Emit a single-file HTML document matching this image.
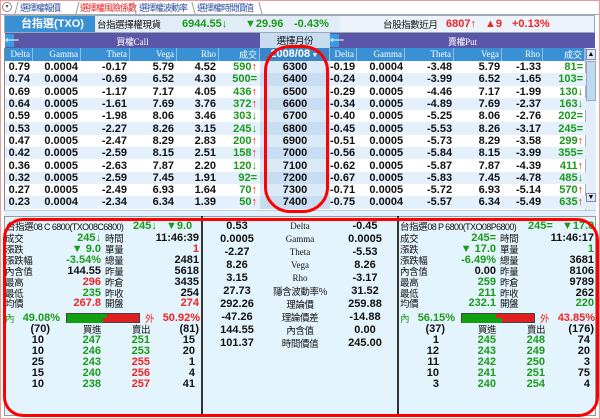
<!DOCTYPE html>
<html><head><meta charset="utf-8"><style>
*{margin:0;padding:0;box-sizing:border-box}
body{width:600px;height:419px;overflow:hidden;background:#fff;font-family:"Liberation Sans","Noto Sans CJK TC",sans-serif;position:relative}
.a{position:absolute;white-space:nowrap;line-height:11px}
.frame{position:absolute;left:0;top:0;width:600px;height:419px;border:1px solid #f09a9a}
.g{color:#1a9a1a}.r{color:#f02424}.k{color:#111}
.b{font-weight:bold;font-size:11px}
.s{font-family:"Liberation Serif","Noto Serif CJK SC",serif;font-size:9px}
.cj{font-family:"Noto Sans CJK TC",sans-serif;font-size:9.5px;letter-spacing:-0.4px}
table{border-collapse:collapse;position:absolute;left:5px;top:61px;table-layout:fixed}
td{height:12.3px;font-weight:bold;font-size:11px;text-align:right;padding:0 3px 0 0;line-height:12px;color:#111}
tr:nth-child(even) td{background:#e4f0fc}
td.st{text-align:center;background:#dceaf8;padding:0}
tr:nth-child(even) td.st{background:#c8dcf2}
td.v{color:#1a9a1a}
.hd{position:absolute;top:48px;height:13px;background:#3a90d4;color:#fff;font-family:"Liberation Serif",serif;font-size:9px;text-align:right;padding-right:2px;line-height:13px;border-right:1px solid #8cc0ea}
.pl{position:absolute;background:#e4f4fc}
.lab{font-family:"Noto Sans CJK TC",sans-serif;font-weight:normal;font-size:9.5px;letter-spacing:-0.4px;color:#111;line-height:11px}
</style></head><body>
<div class="frame"></div>
<div class="a" style="left:2px;top:2px;width:10px;height:10px;border:1px solid #888;border-radius:50%;font-size:6px;text-align:center;line-height:8px;color:#555">▾</div>
<div class="a" style="left:0;top:14px;width:600px;height:1px;background:#aaa"></div>
<div class="a cj" style="left:20px;top:2px;font-size:9px;letter-spacing:-1px;color:#3050a0">選擇權報價</div>
<div class="a cj" style="left:80px;top:2px;font-size:9px;letter-spacing:-1px;color:#f02020">選擇權風險係數</div>
<div class="a cj" style="left:139px;top:2px;font-size:9px;letter-spacing:-1px;color:#3050a0">選擇權波動率</div>
<div class="a cj" style="left:197px;top:2px;font-size:9px;letter-spacing:-1px;color:#3050a0">選擇權時間價值</div>
<div class="a" style="left:16px;top:2px;width:1px;height:12px;background:#999;transform:skewX(-15deg)"></div>
<div class="a" style="left:77px;top:2px;width:1px;height:12px;background:#999;transform:skewX(-15deg)"></div>
<div class="a" style="left:134px;top:2px;width:1px;height:12px;background:#999;transform:skewX(15deg)"></div>
<div class="a" style="left:193px;top:2px;width:1px;height:12px;background:#999;transform:skewX(15deg)"></div>
<div class="a" style="left:260px;top:2px;width:1px;height:12px;background:#999;transform:skewX(15deg)"></div>
<div class="a" style="left:4px;top:15px;width:591px;height:18px;background:#e2ecf6;border:1px solid #9ab"></div>
<div class="a" style="left:5px;top:16px;width:90px;height:16px;background:#3a90d4;color:#fff;font-size:11px;font-weight:bold;line-height:16px;padding-left:16px">台指選(TXO)<span style="font-size:7px;margin-left:12px">▾</span></div>
<div class="a" style="left:340px;top:16px;width:254px;height:16px;background:#ecf3fa"></div>
<div class="a cj k" style="left:97px;top:19px">台指選擇權現貨</div>
<div class="a g b" style="left:182px;top:19px">6944.55↓</div>
<div class="a g b" style="left:245px;top:19px">▼29.96</div>
<div class="a g b" style="left:294px;top:19px">-0.43%</div>
<div class="a cj k" style="left:383px;top:19px">台股指數近月</div>
<div class="a r b" style="left:446px;top:19px">6807↑</div>
<div class="a r b" style="left:485px;top:19px">▲9</div>
<div class="a r b" style="left:512px;top:19px">+0.13%</div>
<div class="a" style="left:5px;top:33px;width:255px;height:15px;background:#5c56a8;color:#fff;text-align:center;line-height:15px"><span class="cj" style="color:#fff;font-size:9px">買權</span><span class="s" style="color:#fff">Call</span></div>
<div class="a" style="left:5px;top:34px;width:9px;height:13px;background:#3a9ae0;color:#fff;font-size:10px;line-height:13px">⟵</div>
<div class="a cj" style="left:260px;top:33px;width:70px;height:15px;background:#c8dcf0;text-align:center;line-height:15px;color:#111">選擇月份</div>
<div class="a" style="left:330px;top:33px;width:265px;height:15px;background:#5c56a8;color:#fff;text-align:center;line-height:15px"><span class="cj" style="color:#fff;font-size:9px">賣權</span><span class="s" style="color:#fff">Put</span></div>
<div class="a" style="left:330px;top:34px;width:9px;height:13px;background:#3a9ae0;color:#fff;font-size:10px;line-height:13px">⟵</div>
<div class="hd" style="left:5px;width:28px">Delta</div>
<div class="hd" style="left:33px;width:48px">Gamma</div>
<div class="hd" style="left:81px;width:49px">Theta</div>
<div class="hd" style="left:130px;width:47px">Vega</div>
<div class="hd" style="left:177px;width:42px">Rho</div>
<div class="hd" style="left:219px;width:41px;font-family:'Noto Sans CJK TC',sans-serif;font-size:9px">成交</div>
<div class="hd" style="left:260px;width:70px;text-align:center;font-family:'Liberation Sans';font-weight:bold;font-size:11px;background:#3a84c8">2008/08 <span style="font-size:7px">▾</span></div>
<div class="hd" style="left:330px;width:27px">Delta</div>
<div class="hd" style="left:357px;width:48px">Gamma</div>
<div class="hd" style="left:405px;width:49px">Theta</div>
<div class="hd" style="left:454px;width:48px">Vega</div>
<div class="hd" style="left:502px;width:41px">Rho</div>
<div class="hd" style="left:543px;width:42px;font-family:'Noto Sans CJK TC',sans-serif;font-size:9px">成交</div>
<div class="a" style="left:585px;top:48px;width:11px;height:164px;background:#e4eef8;border-left:1px solid #aac"></div>
<div class="a" style="left:586px;top:49px;width:10px;height:11px;background:#dde8f4;border:1px solid #88a;font-size:7px;text-align:center;line-height:9px">▲</div>
<div class="a" style="left:586px;top:61px;width:10px;height:40px;background:#c0d8f0;border:1px solid #9ab"></div>
<div class="a" style="left:586px;top:193px;width:10px;height:9px;background:#dde8f4;border:1px solid #88a;font-size:7px;text-align:center;line-height:7px">▼</div>
<table>
<colgroup><col style="width:28px"><col style="width:48px"><col style="width:49px"><col style="width:47px"><col style="width:42px"><col style="width:41px"><col style="width:70px"><col style="width:27px"><col style="width:48px"><col style="width:49px"><col style="width:48px"><col style="width:41px"><col style="width:42px"></colgroup>
<tr><td>0.79</td><td>0.0004</td><td>-0.17</td><td>5.79</td><td>4.52</td><td class="v">590<span class="r">↑</span></td><td class="st">6300</td><td>-0.19</td><td>0.0004</td><td>-3.48</td><td>5.79</td><td>-1.33</td><td class="v">81=</td></tr>
<tr><td>0.74</td><td>0.0004</td><td>-0.69</td><td>6.52</td><td>4.30</td><td class="v">500=</td><td class="st">6400</td><td>-0.24</td><td>0.0004</td><td>-3.99</td><td>6.52</td><td>-1.65</td><td class="v">103=</td></tr>
<tr><td>0.69</td><td>0.0005</td><td>-1.17</td><td>7.17</td><td>4.05</td><td class="v">436<span class="r">↑</span></td><td class="st">6500</td><td>-0.29</td><td>0.0005</td><td>-4.46</td><td>7.17</td><td>-1.99</td><td class="v">130↓</td></tr>
<tr><td>0.64</td><td>0.0005</td><td>-1.61</td><td>7.69</td><td>3.76</td><td class="v">372<span class="r">↑</span></td><td class="st">6600</td><td>-0.34</td><td>0.0005</td><td>-4.89</td><td>7.69</td><td>-2.37</td><td class="v">163↓</td></tr>
<tr><td>0.59</td><td>0.0005</td><td>-1.98</td><td>8.06</td><td>3.46</td><td class="v">303↓</td><td class="st">6700</td><td>-0.40</td><td>0.0005</td><td>-5.25</td><td>8.06</td><td>-2.76</td><td class="v">202=</td></tr>
<tr><td>0.53</td><td>0.0005</td><td>-2.27</td><td>8.26</td><td>3.15</td><td class="v">245↓</td><td class="st">6800</td><td>-0.45</td><td>0.0005</td><td>-5.53</td><td>8.26</td><td>-3.17</td><td class="v">245=</td></tr>
<tr><td>0.47</td><td>0.0005</td><td>-2.47</td><td>8.29</td><td>2.83</td><td class="v">200<span class="r">↑</span></td><td class="st">6900</td><td>-0.51</td><td>0.0005</td><td>-5.73</td><td>8.29</td><td>-3.58</td><td class="v">299<span class="r">↑</span></td></tr>
<tr><td>0.42</td><td>0.0005</td><td>-2.59</td><td>8.15</td><td>2.51</td><td class="v">158<span class="r">↑</span></td><td class="st">7000</td><td>-0.56</td><td>0.0005</td><td>-5.84</td><td>8.15</td><td>-3.99</td><td class="v">355=</td></tr>
<tr><td>0.36</td><td>0.0005</td><td>-2.63</td><td>7.87</td><td>2.20</td><td class="v">120↓</td><td class="st">7100</td><td>-0.62</td><td>0.0005</td><td>-5.87</td><td>7.87</td><td>-4.39</td><td class="v">411<span class="r">↑</span></td></tr>
<tr><td>0.32</td><td>0.0005</td><td>-2.59</td><td>7.45</td><td>1.91</td><td class="v">92=</td><td class="st">7200</td><td>-0.67</td><td>0.0005</td><td>-5.83</td><td>7.45</td><td>-4.78</td><td class="v">485↓</td></tr>
<tr><td>0.27</td><td>0.0005</td><td>-2.49</td><td>6.93</td><td>1.64</td><td class="v">70<span class="r">↑</span></td><td class="st">7300</td><td>-0.71</td><td>0.0005</td><td>-5.72</td><td>6.93</td><td>-5.14</td><td class="v">570<span class="r">↑</span></td></tr>
<tr><td>0.23</td><td>0.0004</td><td>-2.34</td><td>6.34</td><td>1.39</td><td class="v">50<span class="r">↑</span></td><td class="st">7400</td><td>-0.75</td><td>0.0004</td><td>-5.57</td><td>6.34</td><td>-5.49</td><td class="v">635<span class="r">↑</span></td></tr>
</table>
<div class="a" style="left:4px;top:48px;width:1px;height:164px;background:#888"></div>
<div class="a" style="left:4px;top:210px;width:592px;height:6px;background:#e4f0fc;border-top:1px solid #bcd"></div>
<div class="a" style="left:264px;top:45px;width:65px;height:168px;border:3px solid #f00;border-radius:26px"></div>
<div class="pl" style="left:4px;top:216px;width:592px;height:200px;border:1px solid #999"></div>
<div class="a" style="left:201px;top:216px;width:2px;height:200px;background:#333"></div>
<div class="a" style="left:397px;top:216px;width:2px;height:200px;background:#333"></div>
<div class="a" style="left:6px;top:221px;font-size:9px;letter-spacing:-0.6px;color:#111"><span class="lab">台指選</span>08 C 6800(TXO08C6800)</div>
<div class="a g b" style="left:133px;top:221px">245↓</div>
<div class="a g b" style="left:166px;top:221px">▼9.0</div>
<div class="a" style="left:400px;top:221px;font-size:9px;letter-spacing:-0.6px;color:#111"><span class="lab">台指選</span>08 P 6800(TXO08P6800)</div>
<div class="a g b" style="left:528px;top:221px">245=</div>
<div class="a g b" style="left:562px;top:221px">▼17.0</div>
<script>
function add(html){document.body.insertAdjacentHTML('beforeend',html)}
function txt(x,y,t,c,al,extra){
 var st=al=='r'?'right:'+(600-x)+'px':al=='c'?'left:'+(x-50)+'px;width:100px;text-align:center':'left:'+x+'px';
 add('<div class="a '+(c||'')+'" style="top:'+y+'px;'+st+';'+(extra||'')+'">'+t+'</div>');
}
function panel(o,d){
 var labs1=['成交','漲跌','漲跌幅','內含值','最高','最低','均價'],labs2=['時間','單量','總量','昨量','昨倉','昨收','開盤'];
 for(var i=0;i<7;i++){var y=233+i*10.9;
  txt(o+5,y,labs1[i],'lab');txt(o+101,y,d.v1[i][0],'b '+d.v1[i][1],'r');
  txt(o+105,y,labs2[i],'lab');txt(o+199,y,d.v2[i][0],'b '+d.v2[i][1],'r');}
 var y=313;
 txt(o+5,y,'內','lab','','color:#1a9a1a');txt(o+60,y,d.inn,'b g','r');
 add('<div class="a" style="left:'+(o+66)+'px;top:313px;width:74px;height:10px;border:1px solid #444;background:#e02020"><div style="position:absolute;left:0;top:4px;width:'+d.bw+'px;height:5px;background:#10a010"></div><div style="position:absolute;left:0;top:0;width:'+d.bw2+'px;height:4px;background:#10a010"></div></div>');
 txt(o+145,y,'外','lab','','color:#f02424');txt(o+200,y,d.out,'b r','r');
 y=324;txt(o+50,y,d.q1,'b k','r');txt(o+92,y,'買進','lab','c');txt(o+141,y,'賣出','lab','c');txt(o+199,y,d.q2,'b k','r');
 for(var i=0;i<5;i++){var r=d.ob[i];y=335+i*10.9;
  txt(o+44,y,r[0],'b k','r');txt(o+101,y,r[1],'b g','r');txt(o+150,y,r[2],'b '+r[3],'r');txt(o+195,y,r[4],'b k','r');}
}
panel(0,{v1:[['245↓','g'],['▼ 9.0','g'],['-3.54%','g'],['144.55','k'],['296','r'],['235','g'],['267.8','r']],
 v2:[['11:46:39','k'],['1','r'],['2481','k'],['5618','k'],['3435','k'],['254','k'],['274','r']],
 inn:'49.08%',out:'50.92%',bw:36,bw2:40,q1:'(70)',q2:'(81)',
 ob:[['10','247','251','g','15'],['10','246','253','g','20'],['25','243','255','r','1'],['15','240','256','r','4'],['10','238','257','r','41']]});
panel(395,{v1:[['245=','g'],['▼ 17.0','g'],['-6.49%','g'],['0.00','k'],['259','g'],['211','g'],['232.1','g']],
 v2:[['11:46:17','k'],['1','g'],['3681','k'],['8106','k'],['9789','k'],['262','k'],['220','g']],
 inn:'56.15%',out:'43.85%',bw:40,bw2:34,q1:'(37)',q2:'(176)',
 ob:[['1','245','248','g','74'],['12','243','249','g','20'],['11','242','250','g','3'],['10','241','251','g','75'],['3','240','254','g','4']]});
var mid=[['0.53','Delta','-0.45'],['0.0005','Gamma','0.0005'],['-2.27','Theta','-5.53'],['8.26','Vega','8.26'],['3.15','Rho','-3.17'],['27.73','隱含波動率%','31.52'],['292.26','理論價','259.88'],['-47.26','理論價差','-14.88'],['144.55','內含值','0.00'],['101.37','時間價值','245.00']];
for(var i=0;i<10;i++){var y=221+i*13;
 txt(237,y,mid[i][0],'b k','c');txt(300,y,mid[i][1],i<5?'s k':'lab','c');txt(365,y,mid[i][2],'b k','c');}
</script>
<div class="a" style="left:3px;top:218px;width:596px;height:199px;border:3px solid #f00;border-radius:20px 22px 20px 20px"></div>
</body></html>
